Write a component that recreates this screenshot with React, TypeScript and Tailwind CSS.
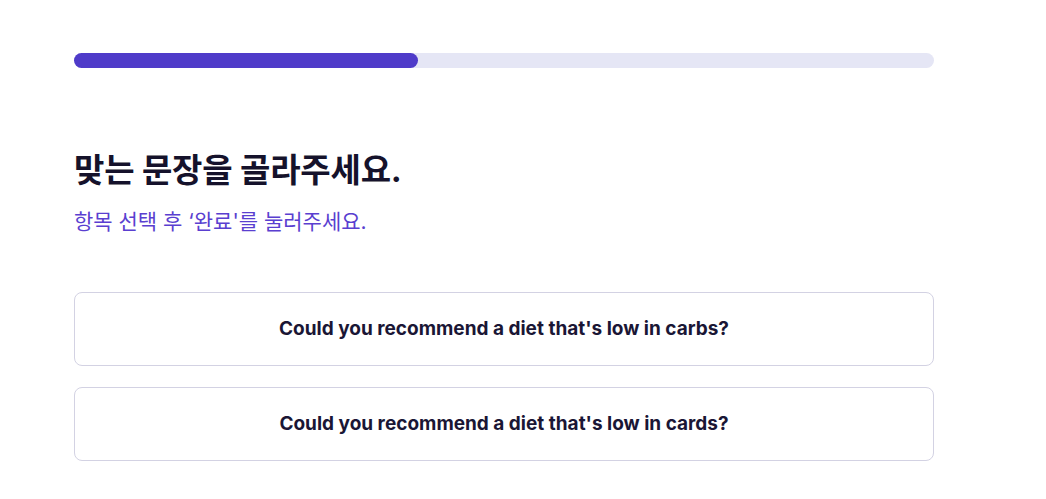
export default function App() {
  const options = [
    "Could you recommend a diet that's low in carbs?",
    "Could you recommend a diet that's low in cards?",
  ];
  return (
    <div className="min-h-screen bg-white font-['Inter','Noto_Sans_CJK_KR',sans-serif]">
      <div className="w-[860px] ml-[74px] pt-[53px]">
        <div className="h-[15px] w-full rounded-full bg-[#e5e6f5]">
          <div className="h-full w-[40%] rounded-full bg-[#4f3bc9]" />
        </div>
        <h1 className="mt-[81px] text-[33px] leading-[42px] font-bold text-[#15122b] tracking-[-0.2px]">
          맞는 문장을 골라주세요.
        </h1>
        <p className="mt-[17px] text-[21px] leading-[28px] text-[#5a3fd0]">
          항목 선택 후 ‘완료'를 눌러주세요.
        </p>
        <div className="mt-[56px] flex flex-col gap-[21px]">
          {options.map((o) => (
            <button
              key={o}
              className="h-[74px] w-full rounded-[8px] border border-[#d3d2e3] bg-white text-[19px] font-bold text-[#1a1635]"
            >
              {o}
            </button>
          ))}
        </div>
      </div>
    </div>
  );
}
